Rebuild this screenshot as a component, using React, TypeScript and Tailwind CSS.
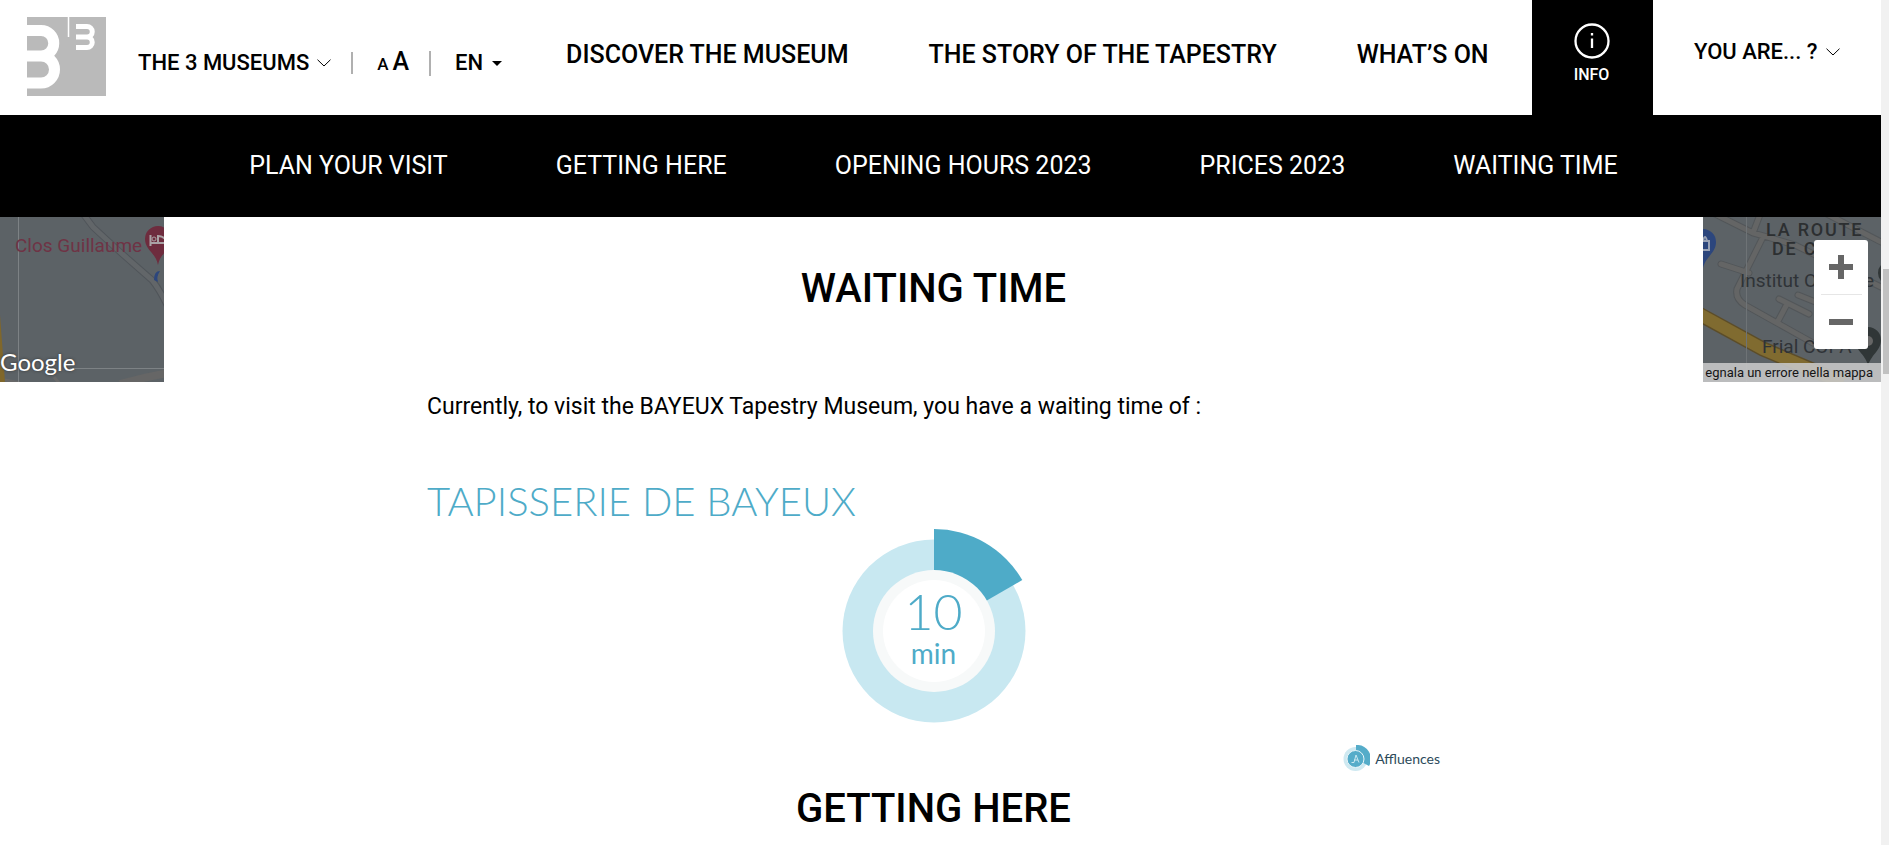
import { useState } from "react";

const mainLinks = ["DISCOVER THE MUSEUM", "THE STORY OF THE TAPESTRY", "WHAT’S ON"];

const subLinks = [
  "PLAN YOUR VISIT",
  "GETTING HERE",
  "OPENING HOURS 2023",
  "PRICES 2023",
  "WAITING TIME",
];

function Logo() {
  return (
    <svg viewBox="0 0 79 79" className="h-[79px] w-[79px]" aria-hidden="true">
      <rect width="79" height="79" fill="#bababa" />
      <g fill="none" stroke="#fff">
        <path d="M0 13.5H14A12.750 12.750 0 0 1 14 39H0M14 39A13.500 13.500 0 0 1 14 66H0" strokeWidth="11" />
        <path d="M41.5 0V20" strokeWidth="1.5" />
        <path d="M49 9.500H60A5.250 5.250 0 0 1 60 20H49M60 20A5.250 5.250 0 0 1 60 30.500H49" strokeWidth="5" />
      </g>
    </svg>
  );
}

function Chevron() {
  return (
    <svg viewBox="0 0 14 8" className="h-2 w-[14px]" fill="none" stroke="currentColor" aria-hidden="true">
      <path d="M.5 .7 7 7 13.500 .7" />
    </svg>
  );
}

function Header() {
  const [lang, setLang] = useState("EN");

  return (
    <header className="flex h-[115px] items-start bg-white font-medium">
      <a href="#home" aria-label="Home" className="ml-[27px] mt-[17px] shrink-0">
        <Logo />
      </a>
      <div className="ml-8 mt-12 flex h-[30px] items-center text-[22px] leading-[30px]">
        <button className="flex items-center gap-2 whitespace-nowrap">
          THE 3 MUSEUMS <Chevron />
        </button>
        <span className="ml-5 h-[22px] w-[2px] bg-[#b0b0b0]" />
        <div className="ml-6 flex items-baseline gap-1">
          <button aria-label="Smaller text" className="text-[17px]">A</button>
          <button aria-label="Larger text" className="text-[25px] leading-[30px]">A</button>
        </div>
        <span className="ml-5 h-[25px] w-[2px] bg-[#b0b0b0]" />
        <div className="ml-6 flex items-center gap-2">
          <select
            aria-label="Language"
            value={lang}
            onChange={(e) => setLang(e.target.value)}
            className="appearance-none bg-transparent leading-[30px]"
          >
            <option>EN</option>
            <option>FR</option>
          </select>
          <svg viewBox="0 0 10 5" className="h-[5px] w-[10px]" aria-hidden="true">
            <path d="M0 0H10L5 5Z" />
          </svg>
        </div>
      </div>
      <nav className="ml-16 mt-10 flex flex-1 gap-20 whitespace-nowrap text-[25px] leading-[30px]">
        {mainLinks.map((l) => (
          <a key={l} href="#menu">{l}</a>
        ))}
      </nav>
      <a href="#info" className="flex h-full w-[121px] shrink-0 flex-col items-center bg-black pr-0.5 pt-[23px] text-white">
        <svg viewBox="0 0 36 36" className="h-9 w-9" fill="none" stroke="#fff" aria-hidden="true">
          <circle cx="18" cy="18" r="16.500" strokeWidth="2.300" />
          <path d="M18 15.500V25" strokeWidth="2.300" />
          <path d="M18 10V12.500" strokeWidth="2.300" />
        </svg>
        <span className="mt-1 text-base leading-6">INFO</span>
      </a>
      <button className="flex w-[228px] shrink-0 items-center gap-2 whitespace-nowrap pl-[41px] pt-[37px] text-[22px] leading-[30px]">
        YOU ARE... ? <Chevron />
      </button>
    </header>
  );
}

function MapLeft() {
  return (
    <div className="relative h-[165px] overflow-hidden bg-[#5c6266]">
      <svg viewBox="0 0 164 165" className="h-full w-full" fill="none" aria-hidden="true">
        <path d="M84-2 93 10 120 35 152 63Q160 73 168 90" stroke="#50555a" strokeWidth="7" />
        <path d="M84-2 93 10 120 35 152 63Q160 73 168 90" stroke="#626669" strokeWidth="5" />
        <path d="M120 167Q145 160 168 156" stroke="#666" strokeWidth="8" />
        <path d="M0 98 5 165H0Z" fill="#80672b" />
        <path d="M5 163 20 166M54 160 59 166" stroke="#686868" strokeWidth="3" />
        <path d="M18.500 0V165M70 151.500H164" stroke="#7d8285" />
        <path d="M158 48C156 36 145 33 145 22A13 13 0 0 1 171 22C171 33 160 36 158 48Z" fill="#6e2c3e" />
        <path d="M150.500 18V29M150.500 26H166V23Q163 19 158 19V26" stroke="#aaa2a5" strokeWidth="2" />
        <circle cx="154" cy="22" r="2" stroke="#aaa2a5" />
        <path d="M160 54Q154 54 154 63L158 65Q156 60 160 54Z" fill="#2c467d" />
      </svg>
      <span className="absolute left-[15px] top-[17px] whitespace-nowrap font-[Roboto] text-[19px] leading-6 text-[#6f3345]">
        Clos Guillaume
      </span>
      <span className="absolute left-0 top-[129px] font-[Lato] text-2xl leading-8 text-white [text-shadow:0_0_3px_#333]">
        Google
      </span>
    </div>
  );
}

function MapRight() {
  return (
    <div className="relative h-[165px] overflow-hidden bg-[#5c6266] font-[Roboto]">
      <svg viewBox="0 0 178 165" className="h-full w-full" fill="none" aria-hidden="true">
        <g stroke="#525659" strokeWidth="7" strokeLinecap="round">
          <path d="M2-8 50 16 92 28 178 70M50 16 58-5M60 20 34 72Q32 82 42 88L110 126M18 47 46 56M76 82 106 97M84 87 75 104M95 78 125 90M120-5 178 25" />
        </g>
        <g stroke="#646565" strokeWidth="5" strokeLinecap="round">
          <path d="M2-8 50 16 92 28 178 70M50 16 58-5M60 20 34 72Q32 82 42 88L110 126M18 47 46 56M76 82 106 97M84 87 75 104M95 78 125 90M120-5 178 25" />
        </g>
        <path d="M-4 97 60 132 140 166" stroke="#5c4d29" strokeWidth="15" />
        <path d="M-4 97 60 132 140 166" stroke="#806b30" strokeWidth="12" />
        <path d="M43.500 0V165" stroke="#6e7376" />
        <path d="M0 51C3 39 13 36 13 25A13 13 0 0 0 0 12Z" fill="#2c467d" />
        <path d="M0 24H6V33H0M0 24Q2 16 4 24" stroke="#9aa3b5" strokeWidth="2" />
        <circle cx="187" cy="56" r="12" fill="#303637" />
        <path d="M165 150C164 138 152 134 152 123A13 13 0 0 1 178 123C178 134 167 138 165 150Z" fill="#303637" />
        <circle cx="165" cy="124" r="5" fill="#666" />
      </svg>
      <span className="absolute left-[63px] top-1 whitespace-nowrap text-lg font-medium leading-[18px] tracking-widest text-[#2c2f31]">
        LA ROUTE
      </span>
      <span className="absolute left-[69px] top-[23px] whitespace-nowrap text-lg font-medium leading-[18px] tracking-widest text-[#2c2f31]">
        DE C
      </span>
      <span className="absolute left-[37px] top-[52px] whitespace-nowrap text-[19px] leading-6 text-[#2f3337]">Institut O</span>
      <span className="absolute left-[161px] top-[52px] text-[19px] leading-6 text-[#2f3337]">e</span>
      <span className="absolute left-[59px] top-[118px] whitespace-nowrap text-[19px] leading-6 text-[#2f3337]">Frial COPA</span>
      <a
        href="#report"
        className="absolute inset-x-0 bottom-0 whitespace-nowrap bg-[#c5c6c7]/90 pr-2 text-right text-[13px] leading-[19px] text-[#151515]"
      >
        egnala un errore nella mappa
      </a>
      <div className="absolute right-[13px] top-[23px] flex h-[109px] w-[54px] flex-col items-center rounded-[3px] bg-white text-[#666]">
        <button aria-label="Zoom in" className="flex flex-1 items-center">
          <svg viewBox="0 0 24 24" className="h-6 w-6" fill="none" stroke="currentColor" strokeWidth="6">
            <path d="M0 12H24M12 0V24" />
          </svg>
        </button>
        <span className="h-px w-[41px] bg-[#e6e6e6]" />
        <button aria-label="Zoom out" className="flex flex-1 items-center">
          <svg viewBox="0 0 24 24" className="h-6 w-6" fill="none" stroke="currentColor" strokeWidth="6">
            <path d="M0 12H24" />
          </svg>
        </button>
      </div>
    </div>
  );
}

function WaitingGauge() {
  return (
    <div className="relative mx-auto h-[204px] w-[204px]">
      <svg viewBox="-102 -102 204 204" className="h-full w-full" aria-hidden="true">
        <circle r="91.500" fill="#c8e8f1" />
        <path d="M0 0V-102A102 102 0 0 1 88.300 -51Z" fill="#4eabc8" />
        <circle r="61" fill="#f7f9f9" />
        <circle r="51" fill="#fff" />
      </svg>
      <p className="absolute inset-x-12 top-14 flex flex-col items-center font-[Lato] text-[#4eabc8]">
        <span className="text-[50px] font-light leading-[52px]">10</span>
        <span className="text-[28px] leading-8">min</span>
      </p>
    </div>
  );
}

function Affluences() {
  return (
    <a href="#affluences" className="flex items-center justify-end gap-[5px] font-[Lato] text-sm leading-7 text-[#2c4a5a]">
      <svg viewBox="-14 -14 28 28" className="h-7 w-7" aria-hidden="true">
        <circle r="12" cx="-.5" fill="#cfe9f1" />
        <path d="M0 0V-14A14 14 0 0 1 13 7Z" fill="#55acc9" />
        <circle r="8.500" cx="-.5" fill="#55acc9" stroke="#e8f5f9" />
        <path d="M-4.500 3.500H-2L0-4 3 3.500M-2 1H2" fill="none" stroke="#d5edf4" strokeWidth=".9" />
      </svg>
      Affluences
    </a>
  );
}

function Scrollbar() {
  return (
    <div className="w-2 shrink-0 bg-[#f1f1f1] pl-0.5 pt-[269px]" aria-hidden="true">
      <div className="h-[105px] bg-[#c1c1c1]" />
    </div>
  );
}

export default function App() {
  return (
    <div className="flex h-screen overflow-hidden bg-white font-[Roboto,sans-serif] text-black">
      <div className="min-w-0 flex-1">
        <Header />
        <nav className="flex h-[102px] justify-center gap-[108px] whitespace-nowrap bg-black pr-[14px] pt-9 text-[25px] leading-[30px] text-white">
          {subLinks.map((l) => (
            <a key={l} href="#info">{l}</a>
          ))}
        </nav>
        <div className="grid grid-cols-[164px_1fr_178px] items-start">
          <MapLeft />
          <main className="bg-white pt-12">
            <h1 className="text-center text-[40px] font-medium leading-[48px]">WAITING TIME</h1>
            <div className="mx-auto max-w-[1013px]">
              <p className="mt-20 text-[23px] leading-7">
                Currently, to visit the BAYEUX Tapestry Museum, you have a waiting time of :
              </p>
              <h2 className="mb-2 mt-[60px] w-fit font-[Lato] text-[40px] font-light leading-10 text-[#4eabc8]">
                TAPISSERIE DE BAYEUX
              </h2>
              <WaitingGauge />
              <div className="mt-3">
                <Affluences />
              </div>
            </div>
            <h1 className="mt-3 text-center text-[40px] font-medium leading-[48px]">GETTING HERE</h1>
          </main>
          <MapRight />
        </div>
      </div>
      <Scrollbar />
    </div>
  );
}
